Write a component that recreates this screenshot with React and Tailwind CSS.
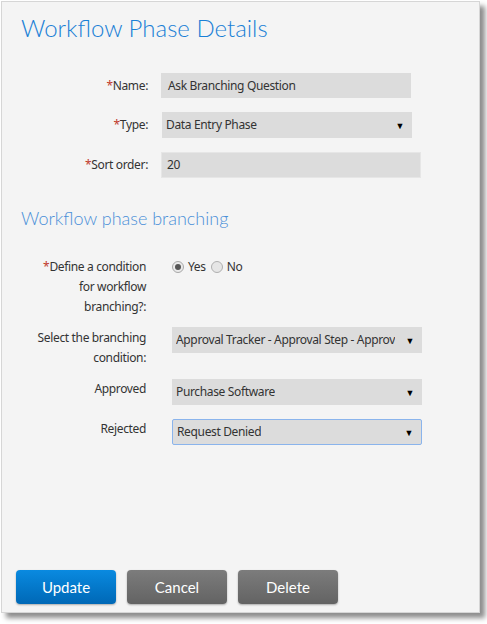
import React from 'react';

const labelFont = { fontFamily: '"Noto Sans", "Open Sans", sans-serif', letterSpacing: '-0.35px' };

function Req({ children }) {
  return (
    <span>
      <span className="text-[#c0392b]">*</span>
      {children}
    </span>
  );
}

function Arrow() {
  return <span className="text-[9px] text-black leading-none shrink-0">▼</span>;
}

function SelectBox({ value, width = 'w-[250px]', focused = false }) {
  return (
    <div
      className={`${width} h-[26px] flex items-center justify-between pl-[4px] pr-[8px] bg-[#dcdcdc] ${
        focused ? 'border border-[#8ab4ec] rounded-[2px]' : ''
      }`}
    >
      <span className="overflow-hidden whitespace-nowrap mr-[10px]">{value}</span>
      <Arrow />
    </div>
  );
}

export default function App() {
  return (
    <div className="bg-white w-[487px] h-[624px] pl-[1px] pt-[1px]" style={labelFont}>
      <div className="w-[479px] h-[612px] bg-[#f4f4f4] border border-[#d6d6d6] shadow-[5px_5px_5px_rgba(0,0,0,0.45)] flex flex-col text-[12px] text-[#333]">
        <h1
          className="pl-[19px] pt-[11px] text-[24px] font-light text-[#1a80d6] leading-[30px]"
          style={{ fontFamily: 'Lato, sans-serif', letterSpacing: '0' }}
        >
          Workflow Phase Details
        </h1>

        <div className="mt-[30px] flex flex-col gap-[14px]">
          <div className="flex items-center gap-[13px]">
            <div className="w-[146px] text-right">
              <Req>Name:</Req>
            </div>
            <div className="w-[250px] h-[25px] bg-[#dcdcdc] flex items-center pl-[7px]">
              Ask Branching Question
            </div>
          </div>
          <div className="flex items-center gap-[14px]">
            <div className="w-[146px] text-right">
              <Req>Type:</Req>
            </div>
            <SelectBox value="Data Entry Phase" />
          </div>
          <div className="flex items-center gap-[13px]">
            <div className="w-[146px] text-right">
              <Req>Sort order:</Req>
            </div>
            <div className="w-[260px] h-[26px] bg-[#dcdcdc] border border-[#e6e6e6] flex items-center pl-[5px]">
              20
            </div>
          </div>
        </div>

        <h2
          className="pl-[19px] mt-[28px] text-[18px] font-light text-[#4a8fd8] leading-[24px]"
          style={{ fontFamily: 'Lato, sans-serif', letterSpacing: '0' }}
        >
          Workflow phase branching
        </h2>

        <div className="mt-[27px] flex flex-col">
          <div className="flex gap-[26px]">
            <div className="w-[144px] text-right leading-[20px]">
              <Req>Define a condition</Req>
              <br />
              for workflow
              <br />
              branching?:
            </div>
            <div className="flex items-center h-[20px] gap-[4px]">
              <span className="w-[12px] h-[12px] rounded-full border border-[#a8a8a8] bg-[#eaeaea] flex items-center justify-center">
                <span className="w-[6px] h-[6px] rounded-full bg-[#555]" />
              </span>
              <span className="mr-[1px]">Yes</span>
              <span className="w-[12px] h-[12px] rounded-full border border-[#b0b0b0] bg-[#e6e6e6]" />
              <span>No</span>
            </div>
          </div>

          <div className="flex gap-[26px] mt-[10px]">
            <div className="w-[144px] text-right leading-[20px] pt-[1px]">
              Select the branching
              <br />
              condition:
            </div>
            <SelectBox value="Approval Tracker - Approval Step - Approval Step" />
          </div>

          <div className="flex gap-[26px] mt-[11px]">
            <div className="w-[144px] text-right leading-[20px]">Approved</div>
            <SelectBox value="Purchase Software" />
          </div>

          <div className="flex gap-[26px] mt-[14px]">
            <div className="w-[144px] text-right leading-[20px]">Rejected</div>
            <SelectBox value="Request Denied" focused />
          </div>
        </div>

        <div className="mt-auto mb-[8px] pl-[14px] flex gap-[11px] text-[15px] text-white" style={{ fontFamily: 'Lato, sans-serif', letterSpacing: '0' }}>
          <button className="w-[100px] h-[34px] rounded-[4px] bg-gradient-to-b from-[#0a8ae0] to-[#0068b6] shadow-[0_1px_2px_rgba(0,0,0,0.3)]">
            Update
          </button>
          <button className="w-[100px] h-[34px] rounded-[4px] bg-gradient-to-b from-[#7c7c7c] to-[#636363] shadow-[0_1px_2px_rgba(0,0,0,0.3)]">
            Cancel
          </button>
          <button className="w-[100px] h-[34px] rounded-[4px] bg-gradient-to-b from-[#7c7c7c] to-[#636363] shadow-[0_1px_2px_rgba(0,0,0,0.3)]">
            Delete
          </button>
        </div>
      </div>
    </div>
  );
}
